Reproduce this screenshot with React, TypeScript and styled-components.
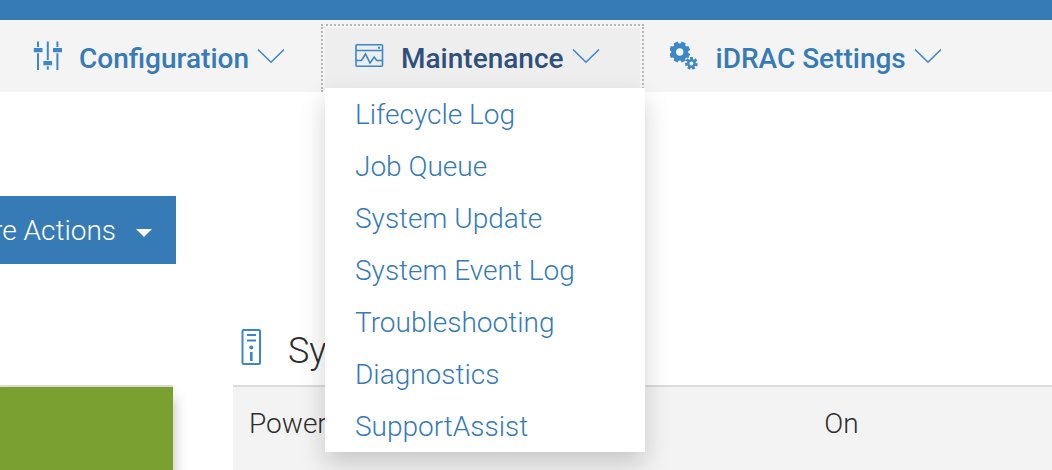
import React from "react";
import styled, { createGlobalStyle } from "styled-components";

const blue = "#367bb6";
const iconBlue = "#3c87c7";

const GlobalStyle = createGlobalStyle`
  *, *::before, *::after { box-sizing: border-box; }
  body {
    margin: 0;
    background: #fff;
    color: #2e2e2e;
    font: 300 28px/40px Roboto, "Liberation Sans", sans-serif;
    overflow: hidden;
  }
`;

const Page = styled.div`
  display: flex;
  flex-direction: column;
  min-height: 100vh;
`;

const TopBar = styled.header`
  height: 20px;
  background: ${blue};
`;

const Nav = styled.nav`
  display: flex;
  padding: 8px 0 4px 3px;
  background: #f4f4f4;
`;

const NavItem = styled.div`
  position: relative;
`;

const NavButton = styled.button<{ $open?: boolean }>`
  display: flex;
  align-items: center;
  height: 60px;
  padding: 0 40px 0 30px;
  border: 0;
  background: ${(p) => (p.$open ? "#eee" : "transparent")};
  color: ${(p) => (p.$open ? "#2f507c" : blue)};
  font: inherit;
  font-weight: 500;
  white-space: nowrap;
  outline: ${(p) => (p.$open ? "2px dotted #b7b7b7" : "none")};
  outline-offset: 2px;
`;

const NavLabel = styled.span`
  padding-top: 2px;
`;

const NavIcon = styled.svg`
  flex: none;
  width: 30px;
  height: 36px;
  margin-right: 16px;
`;

const Chevron = styled.svg`
  flex: none;
  width: 28px;
  height: 20px;
  margin-left: 8px;
  fill: none;
  stroke: ${iconBlue};
  stroke-width: 1.6;
`;

const Menu = styled.ul`
  position: absolute;
  z-index: 2;
  top: 100%;
  left: 0;
  width: 320px;
  margin: 0;
  padding: 0;
  list-style: none;
  background: #fff;
  box-shadow: 0 12px 24px rgba(0, 0, 0, 0.175);
`;

const MenuLink = styled.a`
  display: block;
  padding: 7px 30px 5px;
  color: ${blue};
  text-decoration: none;
`;

const Actions = styled.div`
  display: flex;
  justify-content: flex-end;
  width: 176px;
  margin-top: 104px;
  overflow: hidden;
`;

const ActionButton = styled.button`
  display: flex;
  flex: none;
  align-items: center;
  gap: 20px;
  height: 68px;
  padding: 2px 24px 0;
  border: 0;
  background: ${blue};
  color: #fff;
  font: inherit;
`;

const Caret = styled.span`
  margin-top: 4px;
  border: 8px solid transparent;
  border-top-color: #fff;
  border-bottom: 0;
`;

const Panels = styled.main`
  display: grid;
  flex: 1;
  grid-template-columns: 173px 1fr;
  gap: 60px;
  padding-top: 48px;
`;

const Panel = styled.section`
  display: flex;
  flex-direction: column;
`;

const PanelHead = styled.div`
  display: flex;
  align-items: center;
  gap: 26px;
  height: 75px;
  padding-left: 7px;
  border-bottom: 2px solid #dcdcdc;
`;

const PanelTitle = styled.h2`
  margin: 4px 0 0;
  font-size: 36px;
  font-weight: 300;
  white-space: nowrap;
`;

const ServerIcon = styled.svg`
  width: 22px;
  height: 38px;
  margin-bottom: 4px;
`;

const HealthTile = styled.div`
  flex: 1;
  min-height: 83px;
  background: #7aa030;
  box-shadow: 0 12px 12px 2px rgba(0, 0, 0, 0.22);
`;

const InfoTable = styled.table`
  flex: 1;
  width: 100%;
  height: 83px;
  border-collapse: collapse;
  background: #f3f3f3;
  text-align: left;

  th, td {
    padding: 17px 16px;
    font-weight: 300;
    vertical-align: top;
  }
  th { width: 70%; }
  td { padding-left: 18px; }
`;

function gear(cx: number, cy: number, teeth: number, outer: number, inner: number, hole: number, turn: number) {
  const step = (Math.PI * 2) / teeth;
  const at = (r: number, a: number) => `${(cx + r * Math.cos(a)).toFixed(2)} ${(cy + r * Math.sin(a)).toFixed(2)}`;
  const points: string[] = [];
  for (let i = 0; i < teeth; i++) {
    const a = turn + i * step;
    points.push(at(inner, a - step * 0.36), at(outer, a - step * 0.27), at(outer, a + step * 0.27), at(inner, a + step * 0.36));
  }
  return `M${points.join("L")}ZM${cx - hole} ${cy}a${hole} ${hole} 0 1 0 ${hole * 2} 0a${hole} ${hole} 0 1 0 ${-hole * 2} 0Z`;
}

const SlidersIcon = () => (
  <NavIcon viewBox="0 0 30 36" fill={iconBlue} aria-hidden="true">
    <path d="M4 1.500h2v5.500h-2zM4 13.200h2v16.800h-2zM13.800 1.500h2v18.500h-2zM13.800 26.200h2v3.500h-2zM23.400 1.500h2v5.500h-2zM23.400 13.200h2v16.800h-2z" />
    <path d="M.8 8h8.700v4.200h-8.700zM10.400 21h8.700v4.200h-8.700zM20 8h9v4.200h-9z" />
  </NavIcon>
);

const MonitorIcon = () => (
  <NavIcon viewBox="0 0 30 36" fill="none" stroke={iconBlue} strokeWidth="1.6" aria-hidden="true">
    <rect x="1" y="4.700" width="26.500" height="21.500" rx="1" />
    <path d="M1 10.500h26.500M1 20.500h5.500l4-6.500 4.500 9 4.200-6 2.600 3.500h5.700" />
    <path d="M23 7.800h2" strokeWidth="2" />
  </NavIcon>
);

const GearsIcon = () => (
  <NavIcon viewBox="0 0 30 36" fill={iconBlue} fillRule="evenodd" aria-hidden="true">
    <path d={gear(9.7, 12, 8, 10.6, 8.6, 3.7, Math.PI / 8)} />
    <path d={gear(21.4, 23.4, 7, 6.5, 4.4, 2, 0.25)} />
  </NavIcon>
);

const ChevronDown = () => (
  <Chevron viewBox="0 0 28 20" aria-hidden="true">
    <path d="M1 1.500l13 12.700 13-12.700" />
  </Chevron>
);

const maintenanceLinks = [
  "Lifecycle Log",
  "Job Queue",
  "System Update",
  "System Event Log",
  "Troubleshooting",
  "Diagnostics",
  "SupportAssist",
];

export default function App() {
  return (
    <Page>
      <GlobalStyle />
      <TopBar />
      <Nav aria-label="Main">
        <NavItem>
          <NavButton type="button">
            <SlidersIcon />
            <NavLabel>Configuration</NavLabel>
            <ChevronDown />
          </NavButton>
        </NavItem>
        <NavItem>
          <NavButton type="button" $open aria-expanded="true">
            <MonitorIcon />
            <NavLabel>Maintenance</NavLabel>
            <ChevronDown />
          </NavButton>
          <Menu>
            {maintenanceLinks.map((label) => (
              <li key={label}>
                <MenuLink href="#">{label}</MenuLink>
              </li>
            ))}
          </Menu>
        </NavItem>
        <NavItem>
          <NavButton type="button">
            <GearsIcon />
            <NavLabel>iDRAC Settings</NavLabel>
            <ChevronDown />
          </NavButton>
        </NavItem>
      </Nav>
      <Actions>
        <ActionButton type="button">
          More Actions
          <Caret />
        </ActionButton>
      </Actions>
      <Panels>
        <Panel>
          <PanelHead />
          <HealthTile />
        </Panel>
        <Panel>
          <PanelHead>
            <ServerIcon viewBox="0 0 22 38" fill={iconBlue} aria-hidden="true">
              <rect x="2.500" y="2" width="17.500" height="34" rx="1" fill="none" stroke={iconBlue} strokeWidth="2" />
              <path d="M7 6h9v2h-9zM7 11.500h9v2h-9zM10 24h2.600v9h-2.600z" />
              <circle cx="11.300" cy="19.500" r="2" />
            </ServerIcon>
            <PanelTitle>System Information</PanelTitle>
          </PanelHead>
          <InfoTable>
            <tbody>
              <tr>
                <th scope="row">Power State</th>
                <td>On</td>
              </tr>
            </tbody>
          </InfoTable>
        </Panel>
      </Panels>
    </Page>
  );
}
